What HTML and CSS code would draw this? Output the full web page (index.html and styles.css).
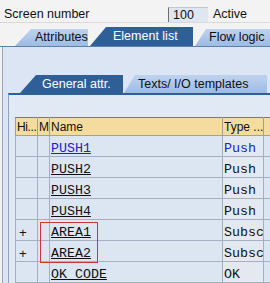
FILE: index.html
```html
<!DOCTYPE html>
<html lang="en">
<head>
<meta charset="UTF-8">
<meta name="viewport" content="width=device-width, initial-scale=1.0">
<title>Screen Painter - Element list</title>
<link rel="stylesheet" href="styles.css">
</head>
<body>
<div class="top-bar">
  <span class="field-label">Screen number</span>
  <span class="field-value">100</span>
  <span class="field-status">Active</span>
</div>
<div class="main-tabs">
  <div class="tab tab-attributes">Attributes</div>
  <div class="tab tab-active tab-elements">Element list</div>
  <div class="tab tab-flow">Flow logic</div>
</div>
<div class="outer-panel">
  <div class="sub-tabs">
    <div class="tab tab-active tab-general">General attr.</div>
    <div class="tab tab-texts">Texts/ I/O templates</div>
  </div>
  <div class="inner-panel">
    <div class="table-wrap">
      <table class="element-table">
        <colgroup>
          <col class="col-hi">
          <col class="col-m">
          <col class="col-name">
          <col class="col-type">
          <col class="col-more">
        </colgroup>
        <thead>
          <tr>
            <th class="head-hi">Hi...</th>
            <th>M</th>
            <th>Name</th>
            <th>Type ...</th>
            <th></th>
          </tr>
        </thead>
        <tbody>
          <tr>
            <td></td><td></td>
            <td class="name link">PUSH1</td>
            <td class="type link">Push</td>
            <td></td>
          </tr>
          <tr>
            <td></td><td></td>
            <td class="name">PUSH2</td>
            <td class="type">Push</td>
            <td></td>
          </tr>
          <tr>
            <td></td><td></td>
            <td class="name">PUSH3</td>
            <td class="type">Push</td>
            <td></td>
          </tr>
          <tr>
            <td></td><td></td>
            <td class="name">PUSH4</td>
            <td class="type">Push</td>
            <td></td>
          </tr>
          <tr>
            <td class="hier">+</td><td></td>
            <td class="name">AREA1</td>
            <td class="type">Subsc</td>
            <td></td>
          </tr>
          <tr>
            <td class="hier">+</td><td></td>
            <td class="name">AREA2</td>
            <td class="type">Subsc</td>
            <td></td>
          </tr>
          <tr>
            <td></td><td></td>
            <td class="name">OK_CODE</td>
            <td class="type">OK</td>
            <td></td>
          </tr>
        </tbody>
      </table>
      <div class="highlight"></div>
    </div>
  </div>
</div>
</body>
</html>
```

FILE: styles.css
```css
body {
  margin: 0;
  width: 270px;
  height: 283px;
  overflow: hidden;
  background-color: #f3f3f3;
  font-family: "Liberation Sans", Arial, sans-serif;
  font-size: 12.5px;
  color: #111;
}

.top-bar {
  display: grid;
  grid-template-columns: 168px 40px auto;
  align-items: end;
  height: 23px;
  box-sizing: border-box;
  border-bottom: 1px solid #d9d9d9;
}

.field-label {
  padding-left: 4px;
  line-height: 15px;
}

.field-value {
  height: 15px;
  box-sizing: border-box;
  padding-left: 4px;
  line-height: 14px;
  background-color: #dfe6ef;
  border-left: 1px solid #6f6f6f;
  border-top: 1px solid #c2c8d2;
}

.field-status {
  padding-left: 5px;
  line-height: 15px;
}

.main-tabs,
.sub-tabs {
  display: flex;
  align-items: flex-end;
}

.main-tabs {
  height: 24px;
  box-sizing: border-box;
  padding-left: 15px;
  border-bottom: 1px solid #5d80ad;
}

.tab {
  flex-shrink: 0;
  box-sizing: border-box;
  height: 17px;
  line-height: 17px;
  white-space: nowrap;
  background: linear-gradient(#bfd3ef, #9dbbe4);
  clip-path: polygon(16px 0, 100% 0, 100% 100%, 0 100%);
}

.tab-active {
  height: 19px;
  line-height: 19px;
  background: #2f5f97;
  color: #fff;
}

.tab-attributes {
  width: 73px;
  padding-left: 20px;
}

.tab-elements {
  width: 103px;
  margin-left: 2px;
  padding-left: 23px;
}

.tab-flow {
  flex-grow: 1;
  margin-left: 2px;
  padding-left: 14px;
  clip-path: polygon(11px 0, 100% 0, 100% 100%, 0 100%);
}

.outer-panel {
  height: 236px;
  margin-left: 2px;
  padding-top: 28px;
  box-sizing: border-box;
  border-left: 1px solid #8ea3bf;
  background-color: #dbe5f3;
}

.sub-tabs {
  height: 18px;
  padding-left: 17px;
}

.sub-tabs .tab {
  height: 18px;
  line-height: 18px;
}

.tab-general {
  width: 103px;
  padding-left: 22px;
}

.tab-texts {
  width: 143px;
  margin-left: 1px;
  padding-left: 14px;
  clip-path: polygon(11px 0, 100% 0, 100% 100%, 0 100%);
}

.inner-panel {
  height: 200px;
  margin-left: 5px;
  padding: 22px 0 0 6px;
  box-sizing: border-box;
  border-left: 1px solid #8ea3bf;
  border-top: 2px solid #2f5f97;
  background-color: #e1e9f5;
}

.table-wrap {
  position: relative;
  width: 255px;
}

.element-table {
  border-collapse: collapse;
  table-layout: fixed;
  width: 255px;
}

.col-hi {
  width: 22px;
}

.col-m {
  width: 12px;
}

.col-name {
  width: 173px;
}

.col-type {
  width: 41px;
}

.col-more {
  width: 7px;
}

.element-table th {
  height: 18px;
  padding: 0 0 0 1px;
  box-sizing: border-box;
  text-align: left;
  font-size: 12px;
  font-weight: normal;
  white-space: nowrap;
  overflow: hidden;
  background-color: #f4dc9e;
  border: 1px solid #a7a186;
  border-top-color: #7d7a68;
}

.element-table th.head-hi {
  letter-spacing: -0.4px;
}

.element-table td {
  height: 21px;
  padding: 4px 0 0 1px;
  box-sizing: border-box;
  font-family: "Liberation Mono", "Courier New", monospace;
  font-size: 13.3px;
  line-height: 15px;
  white-space: nowrap;
  overflow: hidden;
  background-color: #dce6f3;
  border: 1px solid #a4afc2;
}

.element-table td.name {
  text-decoration: underline;
}

.element-table td.type {
  background: repeating-conic-gradient(#f3f5f9 0 25%, #d5dde9 0 50%) 0 0 / 2px 2px;
}

.element-table td.link {
  color: #1c22c4;
}

.element-table td.hier {
  padding-left: 3px;
  font-family: "Liberation Sans", Arial, sans-serif;
}

.highlight {
  position: absolute;
  top: 105px;
  left: 25px;
  width: 58px;
  height: 41px;
  box-sizing: border-box;
  border: 1px solid #d2333f;
}
```
